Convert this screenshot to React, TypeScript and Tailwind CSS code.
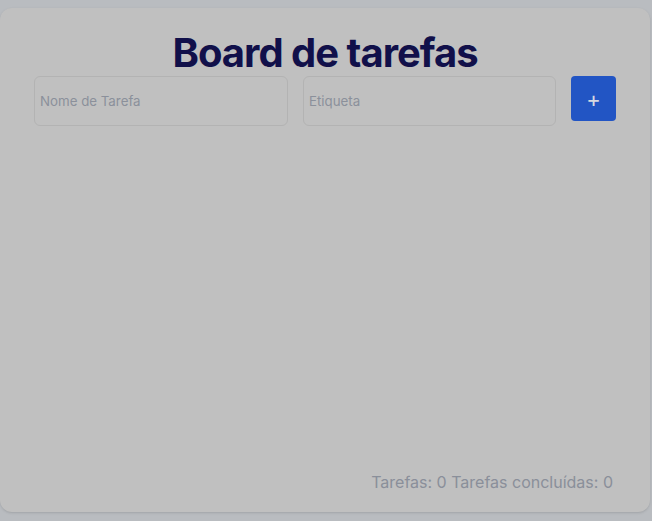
import React, { useState } from "react";

export default function App() {
  const [name, setName] = useState("");
  const [tag, setTag] = useState("");

  return (
    <div className="w-[652px] h-[521px] bg-[#b9bcc0] pt-2 pr-[2px] font-['Inter',sans-serif]">
      <div className="w-[650px] h-[504px] bg-[#c0c0c0] rounded-xl shadow-sm flex flex-col px-[34px] pt-[23px] pb-[18px]">
        <h1 className="text-center text-[40px] leading-[44px] font-bold text-[#11104a] tracking-[-1px] h-[45px]">
          Board de tarefas
        </h1>
        <div className="flex items-start">
          <input
            value={name}
            onChange={(e) => setName(e.target.value)}
            placeholder="Nome de Tarefa"
            className="w-[254px] h-[50px] rounded-md border border-[#b3b3b3] bg-transparent px-[5px] text-[13.3px] text-gray-700 placeholder:text-[#8b909b] outline-none"
          />
          <input
            value={tag}
            onChange={(e) => setTag(e.target.value)}
            placeholder="Etiqueta"
            className="ml-[15px] w-[253px] h-[50px] rounded-md border border-[#b3b3b3] bg-transparent px-[5px] text-[13.3px] text-gray-700 placeholder:text-[#8b909b] outline-none"
          />
          <button className="ml-[15px] w-[45px] h-[45px] rounded-[4px] bg-[#2255c4] text-[#d6d9e0] text-[22px] leading-none flex items-center justify-center">
            +
          </button>
        </div>
        <div className="flex-1" />
        <p className="text-right text-[16px] text-[#8a8f9a] pr-[3px]">
          Tarefas: 0 Tarefas concluídas: 0
        </p>
      </div>
    </div>
  );
}
